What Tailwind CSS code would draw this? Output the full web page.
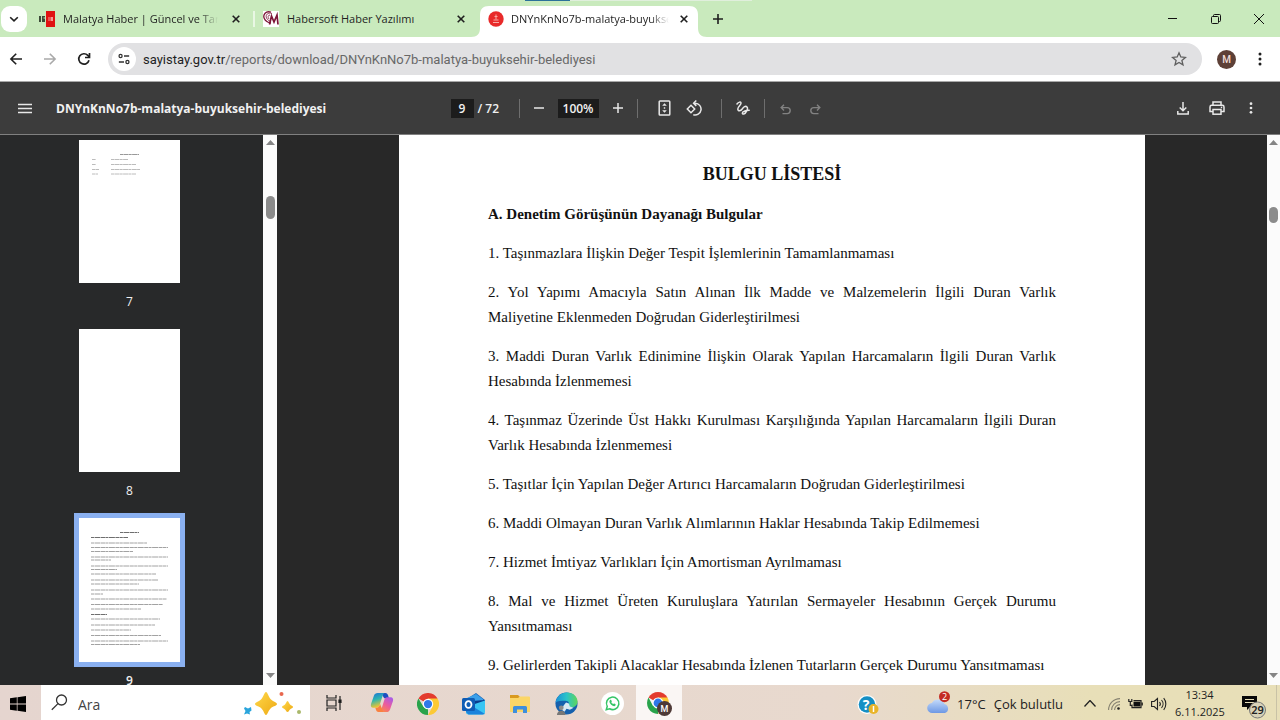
<!DOCTYPE html>
<html lang="tr">
<head>
<meta charset="utf-8">
<title>DNYnKnNo7b-malatya-buyuksehir-belediyesi</title>
<script src="https://cdn.jsdelivr.net/npm/@tailwindcss/browser@4"></script>
</head>
<body class="flex h-screen flex-col overflow-hidden bg-white font-['Open_Sans','Noto_Sans',sans-serif] text-[#1f1f1f]">

<!-- Tab strip -->
<header class="relative flex h-[37px] shrink-0 items-center bg-[#c9eabd]">
  <div class="absolute left-[525px] top-0 h-px w-[45px] bg-[#2c7199]"></div>
  <div class="absolute left-[570px] top-0 h-px w-[182px] bg-[#e0efdc]"></div>
  <button aria-label="Sekmelerde ara" class="ml-px flex h-[26px] w-[26px] items-center justify-center rounded-[9px] bg-white">
    <svg class="h-[10px] w-[10px]" viewBox="0 0 10 10" fill="none" stroke="#1f1f1f" stroke-width="1.6"><path d="M1.200 3.200 5 6.900l3.800-3.700"/></svg>
  </button>
  <nav class="flex h-full items-center pl-1" aria-label="Sekmeler">
    <div class="flex h-full w-56 items-center pl-2">
      <svg class="h-4 w-4 shrink-0" viewBox="0 0 16 16"><rect x="7" y="0" width="9" height="16" fill="#e01212"/><path d="M0 5h2v6H0zM3 5h3v1.500H4.500v1H6V11H3z" fill="#3c4a38"/><path d="M9.500 6h1v4h-1zM11.500 6h2.500v4h-2.500z" fill="#f59a94"/></svg>
      <a href="#" class="ml-2 w-[156px] overflow-hidden pt-0.5 text-[11px] whitespace-nowrap [mask-image:linear-gradient(to_right,#000_88%,transparent)]">Malatya Haber | Güncel ve Taraf</a>
      <button aria-label="Kapat" class="ml-[10px] flex h-4 w-4 items-center justify-center"><svg class="h-2 w-2" viewBox="0 0 8 8" stroke="#1f1f1f" stroke-width="1.6"><path d="m.7.7 6.600 6.600M7.300.7.7 7.300"/></svg></button>
      <span class="ml-[9px] h-4 w-0.5 bg-[#e9f7e4]"></span>
    </div>
    <div class="flex h-full w-56 items-center pl-2">
      <svg class="h-4 w-4 shrink-0" viewBox="0 0 16 16"><path fill="#fff" d="M0 0h16v16H0z"/><g fill="none" stroke="#7d1638"><path stroke-width="1.300" d="M8 1.200C3-.5-.5 3.500 1.300 7.500c1.200 2.700 4 4.200 6.700 4.500"/><path stroke-width=".8" d="M9 2.500C5 1 2 4 3.500 7c.8 1.800 2.500 2.800 4 3.200M7 4c-2 0-2.500 2-1 4"/><path stroke-width="1.700" d="M6.500 13.500 8.500 5l2.500 6 3-7 1 9.500"/></g></svg>
      <a href="#" class="ml-2 w-[156px] overflow-hidden pt-0.5 text-[11px] whitespace-nowrap">Habersoft Haber Yazılımı</a>
      <button aria-label="Kapat" class="ml-[10px] flex h-4 w-4 items-center justify-center"><svg class="h-2 w-2" viewBox="0 0 8 8" stroke="#1f1f1f" stroke-width="1.6"><path d="m.7.7 6.600 6.600M7.300.7.7 7.300"/></svg></button>
    </div>
    <div class="relative flex h-full w-56 items-center pl-[9px]">
      <svg class="absolute -left-2 top-[6px] h-[31px] w-[236px]" viewBox="0 0 236 31"><path fill="#fff" d="M0 31c6 0 9-3 9-9V9c0-6 3-9 9-9h200c6 0 9 3 9 9v13c0 6 3 9 9 9z"/></svg>
      <svg class="relative h-4 w-4 shrink-0" viewBox="0 0 16 16"><circle cx="8" cy="8" r="7.700" fill="#e82a2a"/><path d="M8 3.500v5M5.500 9h5M5 11.500h6M6.500 5.500h3" stroke="#f9aaa4"/></svg>
      <a href="#" class="relative ml-[7px] w-[158px] overflow-hidden pt-0.5 text-[11px] whitespace-nowrap [mask-image:linear-gradient(to_right,#000_88%,transparent)]">DNYnKnNo7b-malatya-buyukse</a>
      <button aria-label="Kapat" class="relative ml-[7px] flex h-4 w-4 items-center justify-center"><svg class="h-2 w-2" viewBox="0 0 8 8" stroke="#1f1f1f" stroke-width="1.6"><path d="m.7.7 6.600 6.600M7.300.7.7 7.300"/></svg></button>
    </div>
  </nav>
  <button aria-label="Yeni sekme" class="ml-[5px] flex h-5 w-5 items-center justify-center"><svg class="h-[10px] w-[10px]" viewBox="0 0 10 10" stroke="#1f1f1f" stroke-width="1.600"><path d="M5 0v10M0 5h10"/></svg></button>
  <div class="ml-auto flex pr-4">
    <button aria-label="Küçült" class="flex h-5 w-[43px] items-center justify-start"><svg class="h-[10px] w-[10px]" viewBox="0 0 10 10" stroke="#111"><path d="M0 4.500h9"/></svg></button>
    <button aria-label="Geri yükle" class="flex h-5 w-[43px] items-center justify-start"><svg class="h-[10px] w-[10px]" viewBox="0 0 10 10" fill="none" stroke="#111"><rect x=".5" y="2.500" width="7" height="7" rx="1"/><path d="M2.500 2.500v-1a1 1 0 0 1 1-1h5a1 1 0 0 1 1 1v5a1 1 0 0 1-1 1h-1"/></svg></button>
    <button aria-label="Pencereyi kapat" class="flex h-5 w-[10px] items-center"><svg class="h-[10px] w-[10px]" viewBox="0 0 10 10" stroke="#111"><path d="m0 0 10 10M10 0 0 10"/></svg></button>
  </div>
</header>

<!-- Address bar -->
<div class="flex h-11 shrink-0 items-center bg-white pl-[9px]">
  <button aria-label="Geri" class="flex h-[14px] w-[14px]"><svg viewBox="0 0 14 14" class="h-[14px] w-[14px]" fill="none" stroke="#1f1f1f" stroke-width="1.600"><path d="M13 7H2M7.200 1.700 1.900 7l5.300 5.300"/></svg></button>
  <button aria-label="İleri" class="ml-5 flex h-[14px] w-[14px]"><svg viewBox="0 0 14 14" class="h-[14px] w-[14px]" fill="none" stroke="#a9a9a9" stroke-width="1.600"><path d="M1 7h11M6.800 1.700 12.100 7l-5.300 5.300"/></svg></button>
  <button aria-label="Yenile" class="ml-5 flex h-[14px] w-[14px]"><svg viewBox="0 0 14 14" class="h-[14px] w-[14px]" fill="none" stroke="#1f1f1f" stroke-width="1.700"><path d="M12 8.300A5.200 5.200 0 1 1 10.800 3.400L12.500 5.200"/><path d="M12.500 1v4.500H8"/></svg></button>
  <div class="ml-[17px] flex h-8 flex-1 items-center rounded-full bg-[#e1e1e3] pl-1">
    <button aria-label="Site bilgileri" class="flex h-6 w-6 shrink-0 items-center justify-center rounded-full bg-white"><svg viewBox="0 0 14 14" class="h-3 w-3" fill="none" stroke="#333" stroke-width="1.500"><circle cx="3" cy="3.500" r="1.800"/><path d="M7 3.500h6M1 10.500h6"/><circle cx="11" cy="10.500" r="1.800"/></svg></button>
    <div class="ml-[7px] flex-1 pt-0.5 font-['Roboto',sans-serif] text-[13px] text-[#686868]"><span class="text-[#1f1f1f]">sayistay.gov.tr</span>/reports/download/DNYnKnNo7b-malatya-buyuksehir-belediyesi</div>
    <button aria-label="Yer işareti" class="mr-[15px] flex"><svg viewBox="0 0 16 16" class="h-4 w-4" fill="none" stroke="#5f5f5f" stroke-width="1.300"><path d="m8 1.800 1.800 4.200 4.600.4-3.500 3 1.100 4.500L8 11.500l-4 2.400 1.100-4.500-3.500-3 4.600-.4z"/></svg></button>
  </div>
  <button aria-label="Profil" class="ml-[15px] flex h-[19px] w-[19px] items-center justify-center rounded-full bg-[#5d4037] font-['Roboto',sans-serif] text-[10px] font-medium text-[#f0ddd8]">M</button>
  <button aria-label="Menü" class="ml-[22px] mr-[18px] flex"><svg viewBox="0 0 4 14" class="h-[14px] w-1" fill="#1f1f1f"><circle cx="2" cy="2" r="1.500"/><circle cx="2" cy="7" r="1.500"/><circle cx="2" cy="12" r="1.500"/></svg></button>
</div>

<!-- PDF toolbar -->
<div class="flex h-[54px] shrink-0 items-center border-y border-t-[#a9a9a9] border-b-[#808080] bg-[#3c3c3c] text-[#f1f1f1]">
  <div class="flex flex-1 items-center pl-[18px]">
    <button aria-label="Kenar çubuğu" class="flex"><svg viewBox="0 0 14 11" class="h-[11px] w-[14px]" stroke="#e8e8e8" stroke-width="1.500"><path d="M0 1.500h14M0 5.500h14M0 9.500h14"/></svg></button>
    <h1 class="ml-6 pt-0.5 text-[12px] font-bold">DNYnKnNo7b-malatya-buyuksehir-belediyesi</h1>
  </div>
  <div class="flex items-center text-[12px] font-semibold">
    <input aria-label="Sayfa" value="9" class="h-[19px] w-[23px] bg-[#1c1c1c] text-center">
    <span class="ml-1 w-[23px] pt-0.5 whitespace-nowrap">/ 72</span>
    <span class="ml-[18px] h-[19px] w-px bg-[#6e6e6e]"></span>
    <button aria-label="Uzaklaştır" class="ml-[14px] flex"><svg viewBox="0 0 10 10" class="h-[10px] w-[10px]" stroke="#e8e8e8" stroke-width="1.500"><path d="M0 5h10"/></svg></button>
    <input aria-label="Yakınlaştırma" value="100%" class="ml-[14px] h-[19px] w-[41px] bg-[#1c1c1c] text-center">
    <button aria-label="Yakınlaştır" class="ml-[14px] flex"><svg viewBox="0 0 10 10" class="h-[10px] w-[10px]" stroke="#e8e8e8" stroke-width="1.500"><path d="M0 5h10M5 0v10"/></svg></button>
    <span class="ml-[14px] h-[19px] w-px bg-[#6e6e6e]"></span>
    <button aria-label="Sayfaya sığdır" class="ml-5 flex"><svg viewBox="0 0 13 16" class="h-4 w-[13px]" fill="none" stroke="#e8e8e8" stroke-width="1.500"><rect x="1.200" y="1" width="10.600" height="14" rx=".8"/><path fill="#e8e8e8" stroke="none" d="m6.500 3.200 2.300 2.600H4.200zM6.500 12.800l2.300-2.600H4.200zM5.800 7.300h1.400v1.400H5.800z"/></svg></button>
    <button aria-label="Döndür" class="ml-[15px] flex"><svg viewBox="0 0 17 17" class="h-[17px] w-[17px]" fill="none" stroke="#e8e8e8" stroke-width="1.500"><path d="m5 5.300 3.700 3.700L5 12.700 1.300 9z"/><path d="M8 3.200h1.300a5.900 5.900 0 1 1-2 11.500M10.300.5 7.600 3.200l2.700 2.700"/></svg></button>
    <span class="ml-[18px] h-[19px] w-px bg-[#6e6e6e]"></span>
    <button aria-label="Çiz" class="ml-[14px] flex"><svg viewBox="0 0 14 14" class="h-[14px] w-[14px]" fill="none" stroke="#e8e8e8" stroke-width="1.500" stroke-linecap="round"><path d="M1 3C2.500 1 5 .3 5 2.200S1.800 5.500 1.800 8s3 2 4.400 0S9.500 4.500 11 6c1.500 1.600-1 6.500-3.200 7-2 .4-1.900-2 .4-2.800 1.600-.6 3.300-.8 5-.9"/></svg></button>
    <span class="ml-[14px] h-[19px] w-px bg-[#6e6e6e]"></span>
    <button aria-label="Geri al" disabled class="ml-[15px] flex pt-0.5"><svg viewBox="0 0 11 11" class="h-[11px] w-[11px]" fill="none" stroke="#828282" stroke-width="1.400"><path d="M4 .8 1.200 3.600 4 6.400M1.500 3.600h5.700a3 3 0 0 1 0 6H2.500"/></svg></button>
    <button aria-label="Yinele" disabled class="ml-[19px] flex pt-0.5"><svg viewBox="0 0 11 11" class="h-[11px] w-[11px]" fill="none" stroke="#828282" stroke-width="1.400"><path d="m7 .8 2.800 2.800L7 6.400M9.500 3.600H3.800a3 3 0 0 0 0 6h4.700"/></svg></button>
  </div>
  <div class="mr-5 flex flex-1 items-center justify-end pr-[7px]">
    <button aria-label="İndir" class="flex"><svg viewBox="0 0 12 13" class="h-[13px] w-3" fill="none" stroke="#e8e8e8" stroke-width="1.500"><path d="M6 0v8.500M2.700 5.500 6 8.700l3.300-3.200M.8 9v3h10.400V9"/></svg></button>
    <button aria-label="Yazdır" class="ml-5 flex"><svg viewBox="0 0 16 14" class="h-[14px] w-4" fill="none" stroke="#e8e8e8" stroke-width="1.500"><path d="M4 4V1h8v3M4 10.500H1V6a1.700 1.700 0 0 1 1.700-1.700h10.600A1.700 1.700 0 0 1 15 6v4.500h-3"/><rect x="4" y="8.500" width="8" height="4.700"/><path d="M11.800 6.400h1.400"/></svg></button>
    <button aria-label="Diğer" class="ml-6 flex"><svg viewBox="0 0 4 14" class="h-3 w-1" fill="#e8e8e8"><circle cx="2" cy="2" r="1.600"/><circle cx="2" cy="7" r="1.600"/><circle cx="2" cy="12" r="1.600"/></svg></button>
  </div>
</div>

<main class="flex min-h-0 flex-1">
  <!-- Thumbnails -->
  <aside class="flex w-[263px] shrink-0 flex-col overflow-hidden bg-[#28292a] pl-[74px] text-[12px] text-[#f1f1f1]">
    <a href="#" class="flex w-[111px] flex-col items-center pt-[5px]">
      <svg class="h-[143px] w-[101px] bg-white" viewBox="0 0 101 143" stroke="#bcbcbc" stroke-dasharray="3 .4 5 .3"><path stroke="#999" d="M41 14.500h19"/><path d="M13 19.500h4M32 19.500h17M13 24.500h4M32 24.500h25M13 29.500h7M32 29.500h29M13 34h6M32 34h25"/></svg>
      <span class="mt-[9px] h-5 leading-5">7</span>
    </a>
    <a href="#" class="mt-[17px] flex w-[111px] flex-col items-center">
      <span class="h-[143px] w-[101px] bg-white"></span>
      <span class="mt-[9px] h-5 leading-5">8</span>
    </a>
    <a href="#" class="mt-3 flex w-[111px] flex-col items-center font-semibold" aria-current="page">
      <span class="border-[5px] border-[#8ab0f0]"><svg class="h-[144px] w-[101px] bg-white" viewBox="0 0 101 144" stroke="#a2a2a2" stroke-dasharray="3 .5 6 .5 4 .4"><path stroke="#6e6e6e" d="M41 14.500h19M12 19.500h37M12 96.500h16"/><path d="M12 25h56M12 29.500h77M12 33.500h42M12 39h77M12 42h20M12 48h77M12 51.500h26M12 56h65M12 62h67M12 66h48M12 72h77M12 76h12M12 81h76M12 86.500h72M12 91h50M12 101h69M12 107h64M12 112h40M12 117.500h70M12 123h77M12 126.500h49"/></svg></span>
      <span class="mt-1 h-4 shrink-0 leading-5">9</span>
    </a>
  </aside>
  <div class="flex w-[14px] shrink-0 flex-col items-center bg-[#fbfbfb]" aria-hidden="true">
    <svg class="mt-[5px] h-[5px] w-[9px]" viewBox="0 0 9 5" fill="#858585"><path d="M4.500 0 9 5H0z"/></svg>
    <div class="mt-[51px] h-[23px] w-[9px] rounded-full bg-[#8b8b8b]"></div>
    <svg class="mt-auto mb-[7px] h-[5px] w-[9px]" viewBox="0 0 9 5" fill="#858585"><path d="M0 0h9L4.500 5z"/></svg>
  </div>

  <!-- Page -->
  <section class="min-w-0 flex-1 overflow-hidden bg-[#282828]">
    <article class="mx-auto min-h-full max-w-[746px] bg-white px-[89px] pt-[27px] font-['Liberation_Serif',serif] text-[15px] leading-[25px] text-[#111]">
      <h2 class="text-center text-[18px] font-bold">BULGU LİSTESİ</h2>
      <h3 class="mt-[15px] font-bold">A. Denetim Görüşünün Dayanağı Bulgular</h3>
      <div class="mt-[14px] flex flex-col gap-[14px] text-justify">
        <p>1. Taşınmazlara İlişkin Değer Tespit İşlemlerinin Tamamlanmaması</p>
        <p>2. Yol Yapımı Amacıyla Satın Alınan İlk Madde ve Malzemelerin İlgili Duran Varlık Maliyetine Eklenmeden Doğrudan Giderleştirilmesi</p>
        <p>3. Maddi Duran Varlık Edinimine İlişkin Olarak Yapılan Harcamaların İlgili Duran Varlık Hesabında İzlenmemesi</p>
        <p>4. Taşınmaz Üzerinde Üst Hakkı Kurulması Karşılığında Yapılan Harcamaların İlgili Duran Varlık Hesabında İzlenmemesi</p>
        <p>5. Taşıtlar İçin Yapılan Değer Artırıcı Harcamaların Doğrudan Giderleştirilmesi</p>
        <p>6. Maddi Olmayan Duran Varlık Alımlarının Haklar Hesabında Takip Edilmemesi</p>
        <p>7. Hizmet İmtiyaz Varlıkları İçin Amortisman Ayrılmaması</p>
        <p>8. Mal ve Hizmet Üreten Kuruluşlara Yatırılan Sermayeler Hesabının Gerçek Durumu Yansıtmaması</p>
        <p>9. Gelirlerden Takipli Alacaklar Hesabında İzlenen Tutarların Gerçek Durumu Yansıtmaması</p>
      </div>
    </article>
  </section>
  <div class="flex w-[13px] shrink-0 flex-col items-center bg-[#fbfbfb]" aria-hidden="true">
    <svg class="mt-[5px] h-[5px] w-[9px]" viewBox="0 0 9 5" fill="#858585"><path d="M4.500 0 9 5H0z"/></svg>
    <div class="mt-[62px] h-4 w-[9px] rounded-full bg-[#8b8b8b]"></div>
    <svg class="mt-auto mb-[7px] h-[5px] w-[9px]" viewBox="0 0 9 5" fill="#858585"><path d="M0 0h9L4.500 5z"/></svg>
  </div>
</main>

<!-- Taskbar -->
<footer class="flex h-[35px] shrink-0 items-center bg-linear-to-r from-[#e5d5cf] via-[#e8d9ce] via-65% to-[#e8dfb8] to-85%">
  <button aria-label="Başlat" class="flex w-[41px] justify-center pt-0.5 pr-[5px]"><svg viewBox="0 0 16 16" class="h-4 w-4" fill="#000"><path d="M0 2.300 6.800 1.300v6.300H0zM7.500 1.200 16 0v7.600H7.500zM0 8.400h6.800v6.300L0 13.700zM7.500 8.400H16V16l-8.500-1.200z"/></svg></button>
  <label class="flex h-full w-[269px] items-center bg-white pl-[10px]">
    <svg viewBox="0 0 17 17" class="h-[17px] w-[17px] shrink-0" fill="none" stroke="#333" stroke-width="1.300"><circle cx="10.500" cy="6" r="5"/><path d="M7 9.600.8 15.800"/></svg>
    <input aria-label="Ara" placeholder="Ara" class="ml-[10px] h-full w-0 flex-1 pt-[3px] text-[14px] placeholder:text-[#444]">
    <svg viewBox="0 0 60 26" class="mr-2 h-[26px] w-[60px] shrink-0"><defs><linearGradient id="gold" x2="1" y2="1"><stop stop-color="#ffd84a"/><stop offset="1" stop-color="#eda914"/></linearGradient></defs><path fill="url(#gold)" d="M24 2c1.500 0 2.500 5 5 7.500s6 2.800 6 4.500-3.500 2-6 4-3.500 7-5 7-2.500-5-5-7-6-2.300-6-4 3.500-2 6-4.500S22.500 2 24 2z"/><path fill="url(#gold)" d="M45.500 11c1 0 1.500 2.500 2.500 3.500s3 1.500 3 2.500-2 1.500-3 2.500-1.500 2.500-2.500 2.500-1.500-1.500-2.500-2.500-3-1.500-3-2.500 2-1.500 3-2.500 1.500-3.500 2.500-3.500z"/><path fill="#2aa5dc" d="m3 17 3 1.500L9 17l.5 3.500-2 1.500.5 2.500-3-1L2 24.500 3.500 21 2 18.500z"/><circle cx="39.500" cy="4" r="2" fill="#e8674e"/><circle cx="57" cy="22" r="2" fill="#a9b86b"/></svg>
  </label>
  <div class="flex h-full items-center">
    <button aria-label="Görev görünümü" class="flex h-full w-12 items-center justify-center"><svg viewBox="0 0 16 16" class="h-4 w-4" fill="none" stroke="#222" stroke-width="1.200"><path d="M1 0v3h9V0M1 16v-3h9v3M1 5h9v6H1zM14 1v14"/><path fill="#111" d="M13 5h2v2.500h-2z"/></svg></button>
    <button aria-label="Copilot" class="flex h-full w-[47px] items-center justify-center"><svg viewBox="0 0 24 22" class="h-[21px] w-6"><defs><linearGradient id="cpa" x2=".3" y2="1"><stop stop-color="#1b6fd8"/><stop offset=".5" stop-color="#2db5b0"/><stop offset="1" stop-color="#f5c52c"/></linearGradient><linearGradient id="cpb" x1=".8" x2=".2" y2="1"><stop stop-color="#a85be8"/><stop offset=".5" stop-color="#ec5c9c"/><stop offset="1" stop-color="#fb8b45"/></linearGradient></defs><path fill="#1c4fc0" d="M11 1h4.500c2 0 2.500 1.500 3 3l.8 2.500h-5z"/><path fill="url(#cpa)" d="M7.500 1H15c-1.500.5-2 2-2.500 3.500L9.500 14c-.5 1.500-1.300 2.500-3 2.500H3C.5 16.500 0 14.500.5 12.500L3.500 4C4.200 2 5.500 1 7.500 1z"/><path fill="url(#cpb)" d="M16.500 21H9c1.500-.5 2-2 2.500-3.500L14.500 8c.5-1.500 1.300-2.500 3-2.500H21c2.500 0 3 2 2.500 4L20.500 18c-.7 2-2 3-4 3z"/><path fill="#f98141" d="M13 21H8.500c-2 0-2.500-1.500-3-3l-.5-1.500h1.500c1.700 0 2.500-1 3-2.500l.5-1.500 2 5z"/></svg></button>
    <button aria-label="Chrome" class="flex h-full w-[46px] items-center justify-center pt-0.5"><svg viewBox="0 0 24 24" class="h-[22px] w-[22px]"><path fill="#e33b2e" d="M12 12 1.600 6A12 12 0 0 1 22.400 6z"/><path fill="#29a34b" d="M12 12v12A12 12 0 0 1 1.600 6L7 15z"/><path fill="#fcc934" d="M12 12V6h10.400A12 12 0 0 1 12 24l5-9z"/><circle cx="12" cy="12" r="5.700" fill="#fff"/><circle cx="12" cy="12" r="4.500" fill="#2f78e8"/></svg></button>
    <button aria-label="Outlook" class="flex h-full w-[46px] items-center justify-center pt-0.5"><svg viewBox="0 0 24 22" class="h-[22px] w-6"><path fill="#1a65b8" d="M3 7 14 0l9 7v6H3z"/><path fill="#3aa0ea" d="M5 5 14 1l7 5v9H5z"/><path fill="#0b3c8c" d="m10 8 13-1-8 8-5-1z"/><path fill="#39c5f3" d="M4 14 23 7.500V19a2.500 2.500 0 0 1-2.500 2.500h-14A2.500 2.500 0 0 1 4 19z"/><path fill="#1b83dc" d="m10 13 13 8-2.500.5h-14L4 19v-3z"/><rect y="5" width="13" height="13" rx="1.500" fill="#0f5db5"/><ellipse cx="6.500" cy="11.500" rx="3" ry="3.400" fill="none" stroke="#fff" stroke-width="1.800"/></svg></button>
    <button aria-label="Dosya Gezgini" class="flex h-full w-[46px] items-center justify-center pt-0.5"><svg viewBox="0 0 22 18" class="h-[18px] w-[22px]"><path fill="#d99a1f" d="M1 0h8l2 2-2 2H1z"/><path fill="#fbd667" d="M1 3h8l2-1.500h9a1 1 0 0 1 1 1V17H1z"/><path fill="#3f8fdc" d="M4 18v-5.500A1.500 1.500 0 0 1 5.500 11h11a1.500 1.500 0 0 1 1.500 1.500V18h-4v-3.500H8V18z"/></svg></button>
    <button aria-label="Edge" class="flex h-full w-[46px] items-center justify-center pt-0.5"><svg viewBox="0 0 24 24" class="h-[23px] w-[23px]"><defs><linearGradient id="edg" x2="1"><stop stop-color="#1b90d8"/><stop offset=".5" stop-color="#2bc3c9"/><stop offset="1" stop-color="#5fd65a"/></linearGradient></defs><circle cx="12" cy="12" r="11.500" fill="#1560ad"/><path fill="url(#edg)" d="M.6 11C1.500 4.500 6.500.5 12.500.5c6.500 0 11 4.500 11 9.500 0 4-3 6-6 6-2.500 0-4-1-3.500-2 1.500-2 .5-5-3-5C6.500 9 2.500 9 .6 11z"/><path fill="#d8e8f2" d="m9 14 2.500-3 3 1 1 3 4 1.500-4 2-3.500-1-2 3-3-2z"/><circle cx="6.500" cy="16.500" r="2.500" fill="#8b8b8b"/><path fill="#777" d="M2 24c0-6 9-6 9 0z"/></svg></button>
    <button aria-label="WhatsApp" class="flex h-full w-[47px] items-center justify-center pt-0.5"><svg viewBox="0 0 24 24" class="h-[23px] w-[23px]"><circle cx="12" cy="12" r="12" fill="#fff"/><path fill="none" stroke="#36c567" stroke-width="1.600" d="m5.500 18.500 1-3.500a6.500 6.500 0 1 1 2.500 2.500z"/><path fill="#36c567" d="M9.500 8.300c.8-.6 1.300 0 1.800 1.500-.7.800-.4 1.200.3 2 .8.800 1.300 1 2 .3 1.500.5 2 1 1.600 1.700-.8 1.500-2.600 1.200-4.600-.5-2-2-2.400-4-1.100-5z"/></svg></button>
    <button aria-label="Chrome, M profili" class="flex h-full w-[46px] items-center justify-center bg-[#faf6f4] pt-0.5"><svg viewBox="0 0 25 24" class="h-6 w-[25px]"><path fill="#e33b2e" d="M11 11 1.500 5.500a11 11 0 0 1 19 0z"/><path fill="#29a34b" d="M11 11v11A11 11 0 0 1 1.500 5.500L6 14z"/><path fill="#fcc934" d="M11 11V5.500h9.500A11 11 0 0 1 11 22l5-8z"/><circle cx="11" cy="11" r="5.500" fill="#fff"/><circle cx="11" cy="11" r="4.400" fill="#2f78e8"/><circle cx="17.500" cy="16.500" r="7.500" fill="#4e3a37"/><text x="17.500" y="20" text-anchor="middle" font-family="Roboto" font-weight="500" font-size="9" fill="#fff">M</text></svg></button>
  </div>
  <div class="ml-auto flex h-full items-center">
    <button aria-label="Yardım" class="mr-12 flex pt-1"><svg viewBox="0 0 22 20" class="h-5 w-[22px]"><circle cx="10" cy="9.500" r="9.500" fill="#fff"/><circle cx="10" cy="9.500" r="8.300" fill="#168fc4"/><text x="9" y="14.500" text-anchor="middle" font-family="Open Sans" font-weight="700" font-size="14" fill="#fff">?</text><circle cx="16.500" cy="14" r="5" fill="#e9b429"/><path stroke="#fff" stroke-width="1.500" d="M16.500 11v6"/></svg></button>
    <button class="flex items-center text-[13px] text-[#222]">
      <svg viewBox="0 0 24 23" class="h-[23px] w-6"><defs><linearGradient id="cloud" y2="1" x2="0"><stop stop-color="#c3dafa"/><stop offset="1" stop-color="#6d98e4"/></linearGradient></defs><path fill="url(#cloud)" d="M5.500 22a5 5 0 0 1-.6-10 7 7 0 0 1 12.500 1A4.700 4.700 0 0 1 18 22z"/><circle cx="17.500" cy="5.700" r="5.500" fill="#c42b23"/><text x="17.500" y="9" text-anchor="middle" font-family="Open Sans" font-size="9" fill="#fff">2</text></svg>
      <span class="ml-[6px] pt-1">17°C</span><span class="ml-2 pt-1">Çok bulutlu</span>
    </button>
    <button aria-label="Gizli simgeler" class="ml-[21px] flex pt-0.5"><svg viewBox="0 0 12 7" class="h-[7px] w-3" fill="none" stroke="#222" stroke-width="1.300"><path d="m.5 6.500 5.500-6 5.500 6"/></svg></button>
    <button aria-label="Ağ" class="ml-3 flex pt-0.5"><svg viewBox="0 0 12 12" class="h-3 w-3" fill="none" stroke="#858170" stroke-width="1.100"><path d="M.6 12A11.400 11.400 0 0 1 12 .6M3.600 12A8.400 8.400 0 0 1 12 3.600M6.600 12A5.400 5.400 0 0 1 12 6.600"/><circle cx="10.500" cy="10.500" r="1.300" fill="#222" stroke="none"/></svg></button>
    <button aria-label="Pil" class="ml-2 flex pt-0.5"><svg viewBox="0 0 15 12" class="h-3 w-[15px]" fill="none" stroke="#222" stroke-width="1.200"><path d="M5.500 2.600H13v7H4V6.500"/><path fill="#111" stroke="none" d="M5.500 3.800h6.800v4.600H5.500zM13.500 4.500h1.300v3h-1.300z"/><path d="M.8 1v2.500h3V1M2.300 3.500v4H4"/></svg></button>
    <button aria-label="Ses" class="ml-2 flex pt-0.5"><svg viewBox="0 0 16 14" class="h-[14px] w-4" fill="none" stroke="#222" stroke-width="1.100"><path d="M.6 4.500h2.600L6.500 1.500v11L3.200 9.500H.6zM8.500 5a3 3 0 0 1 0 4M10.500 3a6 6 0 0 1 0 8M12.700 1.200a9 9 0 0 1 0 11.600"/></svg></button>
    <div class="ml-2 w-[49px] text-center text-[11px] leading-[17px] whitespace-nowrap text-[#222]"><div>13:34</div><div>6.11.2025</div></div>
    <button aria-label="29 bildirim" class="ml-[18px] mr-[9px] flex pt-2"><svg viewBox="0 0 25 24" class="h-6 w-[25px]"><path fill="#080808" d="M0 1h15v11H8l-3 3v-3H0z"/><path stroke="#e8dfb8" d="M3 4.500h9M3 7.500h9"/><circle cx="15.500" cy="15" r="8" fill="#d8d2b8" stroke="#777"/><text x="15.500" y="19" text-anchor="middle" font-family="Noto Sans" font-weight="600" font-size="11" fill="#222">29</text></svg></button>
    <span class="mr-[3px] h-full w-px bg-[#c9c2a6]"></span>
  </div>
</footer>
</body>
</html>
